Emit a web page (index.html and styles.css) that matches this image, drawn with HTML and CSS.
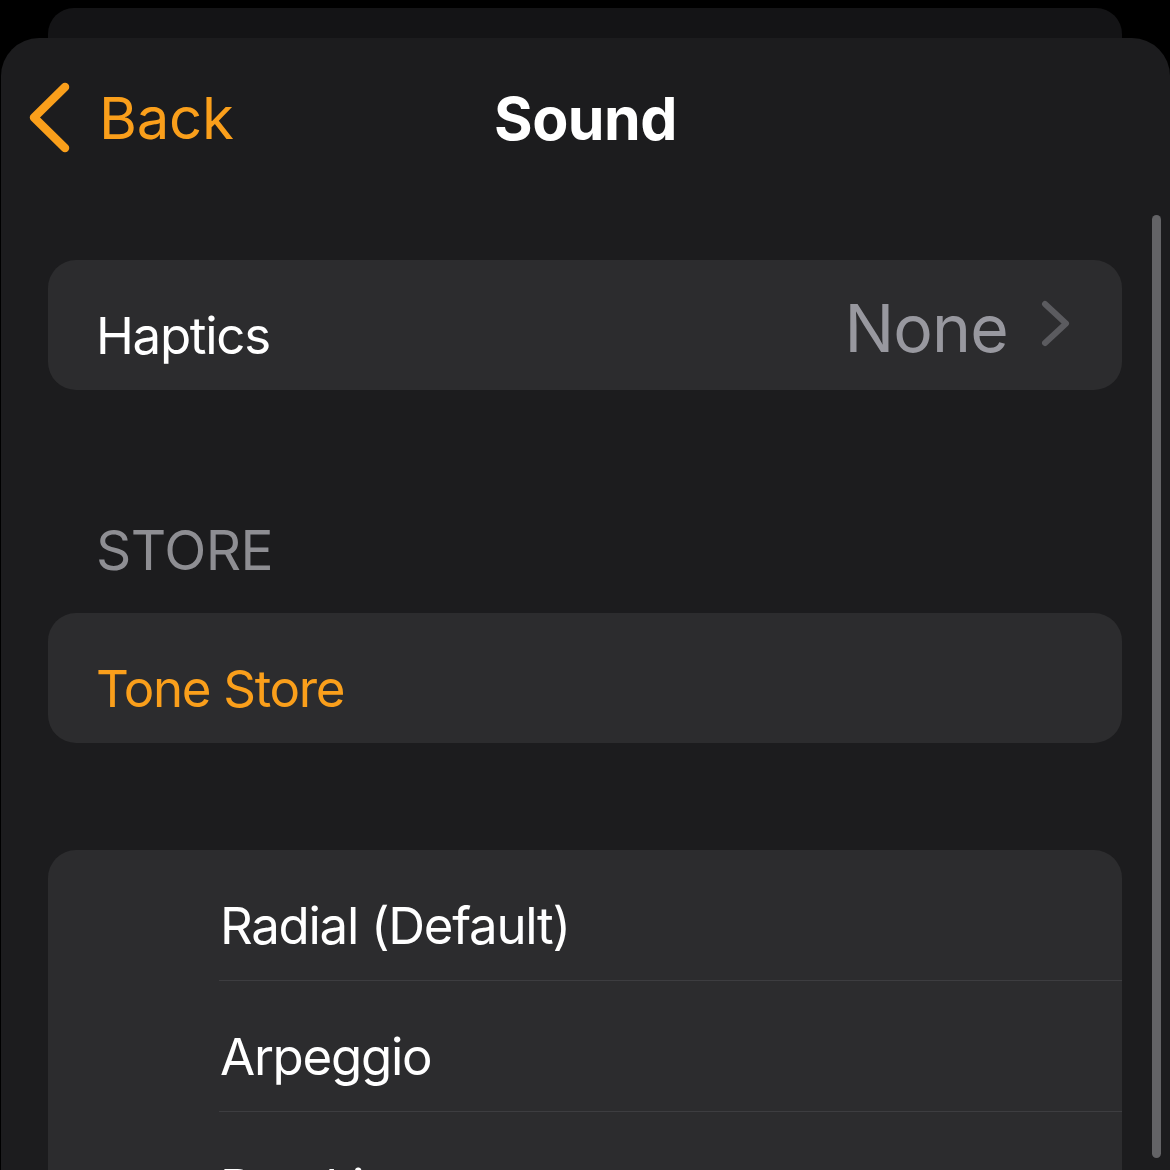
FILE: index.html
```html
<!DOCTYPE html>
<html lang="en">
<head>
    <meta charset="UTF-8">
    <meta name="viewport" content="width=device-width, initial-scale=1.0">
    <title>Sound</title>
    <link rel="stylesheet" href="styles.css">
</head>
<body>
    <div class="behind"></div>

    <div class="sheet">
        <div class="nav">
            <a class="back" href="#">
                <svg class="back-chevron" width="44" height="72" viewBox="0 0 44 72">
                    <polyline points="36,5 5,35.5 36,66" fill="none" stroke="currentColor" stroke-width="8.5" stroke-linecap="round" stroke-linejoin="round"/>
                </svg>
                <span>Back</span>
            </a>
            <div class="title">Sound</div>
            <div></div>
        </div>

        <div class="content">
            <div class="group">
                <div class="cell">
                    <span class="label">Haptics</span>
                    <span class="detail">None</span>
                    <svg class="chevron" width="30" height="48" viewBox="0 0 30 48">
                        <polyline points="5,4 26,23.5 5,43" fill="none" stroke="currentColor" stroke-width="6" stroke-linecap="round" stroke-linejoin="round"/>
                    </svg>
                </div>
            </div>

            <div class="header">STORE</div>
            <div class="group">
                <div class="cell">
                    <span class="label link">Tone Store</span>
                </div>
            </div>

            <div class="group list">
                <div class="cell"><span class="label">Radial (Default)</span></div>
                <div class="cell"><span class="label">Arpeggio</span></div>
                <div class="cell"><span class="label">Breaking</span></div>
            </div>
        </div>

        <div class="scroll-indicator"></div>
    </div>
</body>
</html>
```

FILE: styles.css
```css
html, body {
    margin: 0;
    height: 1170px;
    overflow: hidden;
}
body {
    background-color: #000;
    font-family: Inter, "Noto Sans", sans-serif;
    color: #fff;
}
.behind {
    margin: 8px 48px 0;
    height: 60px;
    background-color: #141416;
    border-radius: 26px 26px 0 0;
}
.sheet {
    position: relative;
    margin: -30px 0 0 1px;
    min-height: 1200px;
    background-color: #1c1c1e;
    border-radius: 38px 38px 0 0;
}
.nav {
    height: 160px;
    display: grid;
    grid-template-columns: 1fr auto 1fr;
    align-items: center;
    padding: 0 28px;
}
.back {
    display: flex;
    align-items: center;
    gap: 26px;
    color: #fa9f1b;
    text-decoration: none;
    font-size: 58px;
    letter-spacing: -0.2px;
}
.back-chevron {
    display: block;
}
.title {
    font-size: 59px;
    font-weight: 700;
    letter-spacing: -0.5px;
}
.content {
    padding: 62px 48px 0 47px;
}
.group {
    background-color: #2c2c2e;
    border-radius: 28px;
    overflow: hidden;
}
.cell {
    box-sizing: border-box;
    height: 130px;
    display: flex;
    align-items: center;
    padding: 20px 52px 0 48px;
}
.label {
    flex: 1;
    font-size: 51px;
    letter-spacing: -1.3px;
    white-space: nowrap;
}
.link {
    color: #fa9f1b;
}
.detail {
    font-size: 66px;
    color: #98989f;
    letter-spacing: -0.8px;
    margin: 0 32px 14px 0;
}
.chevron {
    display: block;
    color: #5b5b5f;
    margin-bottom: 22px;
}
.header {
    margin: 127px 0 30px 48px;
    font-size: 55px;
    line-height: 66px;
    color: #8e8e93;
    letter-spacing: -0.5px;
}
.list {
    margin-top: 107px;
}
.list .cell {
    height: 131px;
    margin-left: 171px;
    padding-left: 1px;
    padding-right: 0;
    border-bottom: 1px solid #3d3d40;
}
.scroll-indicator {
    position: absolute;
    top: 177px;
    right: 9px;
    width: 9px;
    height: 943px;
    border-radius: 5px;
    background-color: #636366;
}
```
